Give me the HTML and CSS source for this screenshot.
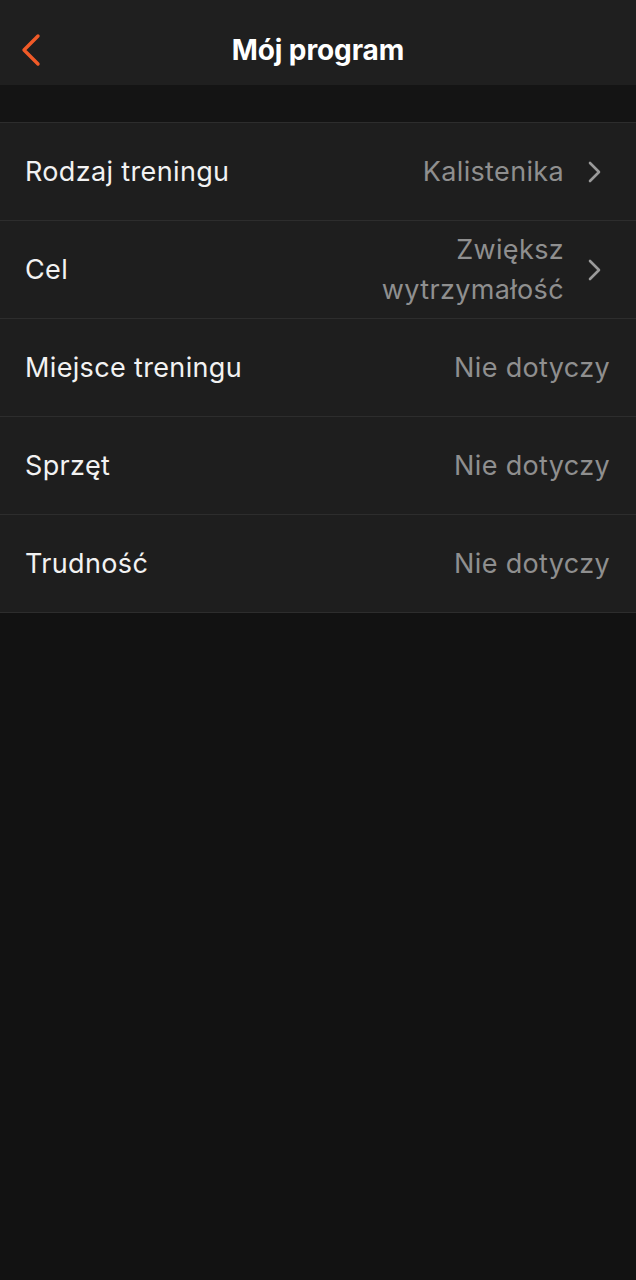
FILE: index.html
```html
<!DOCTYPE html>
<html lang="pl">
<head>
    <meta charset="UTF-8">
    <meta name="viewport" content="width=device-width, initial-scale=1.0">
    <title>Mój program</title>
    <link rel="stylesheet" href="styles.css">
</head>
<body>
    <div id="app">
        <div id="top-bar">
            <button class="back-button" aria-label="Wstecz">
                <svg width="24" height="40" viewBox="0 0 24 40">
                    <path d="M19 6 L5 20 L19 34" fill="none" stroke="#f05a28" stroke-width="3.4" stroke-linecap="round" stroke-linejoin="round"/>
                </svg>
            </button>
            <h1>Mój program</h1>
        </div>

        <div class="spacer"></div>

        <div class="settings-list">
            <div class="setting-row">
                <span class="setting-label">Rodzaj treningu</span>
                <span class="setting-value">Kalistenika</span>
                <svg class="chevron" width="16" height="24" viewBox="0 0 16 24">
                    <path d="M4 3 L13 12 L4 21" fill="none" stroke="#9a9a9a" stroke-width="2.6" stroke-linecap="round" stroke-linejoin="round"/>
                </svg>
            </div>
            <div class="setting-row">
                <span class="setting-label">Cel</span>
                <span class="setting-value">Zwiększ<br>wytrzymałość</span>
                <svg class="chevron" width="16" height="24" viewBox="0 0 16 24">
                    <path d="M4 3 L13 12 L4 21" fill="none" stroke="#9a9a9a" stroke-width="2.6" stroke-linecap="round" stroke-linejoin="round"/>
                </svg>
            </div>
            <div class="setting-row">
                <span class="setting-label">Miejsce treningu</span>
                <span class="setting-value">Nie dotyczy</span>
            </div>
            <div class="setting-row">
                <span class="setting-label">Sprzęt</span>
                <span class="setting-value">Nie dotyczy</span>
            </div>
            <div class="setting-row">
                <span class="setting-label">Trudność</span>
                <span class="setting-value">Nie dotyczy</span>
            </div>
        </div>
    </div>
</body>
</html>
```

FILE: styles.css
```css
body, html {
    margin: 0;
    padding: 0;
    height: 100%;
}

body {
    font-family: Inter, "Noto Sans", sans-serif;
    background-color: #121212;
    color: #fff;
}

#top-bar {
    height: 85px;
    box-sizing: border-box;
    padding-top: 14px;
    background-color: #1f1f1f;
    display: flex;
    align-items: center;
    justify-content: center;
    position: relative;
}

#top-bar h1 {
    margin: 0;
    font-size: 28px;
    font-weight: 700;
    letter-spacing: -0.1px;
}

.back-button {
    position: absolute;
    left: 19px;
    top: 30px;
    background: none;
    border: none;
    padding: 0;
    cursor: pointer;
    display: flex;
}

.spacer {
    height: 37px;
    background-color: #141414;
}

.settings-list {
    background-color: #1e1e1e;
    border-top: 1px solid #2d2d2d;
}

.setting-row {
    display: flex;
    align-items: center;
    height: 97px;
    padding: 0 26px 0 25px;
    border-bottom: 1px solid #2d2d2d;
    font-size: 27px;
    letter-spacing: 0.35px;
}

.setting-label {
    flex-grow: 1;
    color: #f2f2f2;
}

.setting-value {
    color: #8f8f8f;
    text-align: right;
    line-height: 40px;
}

.chevron {
    margin-left: 22px;
    margin-right: 8px;
}
```
